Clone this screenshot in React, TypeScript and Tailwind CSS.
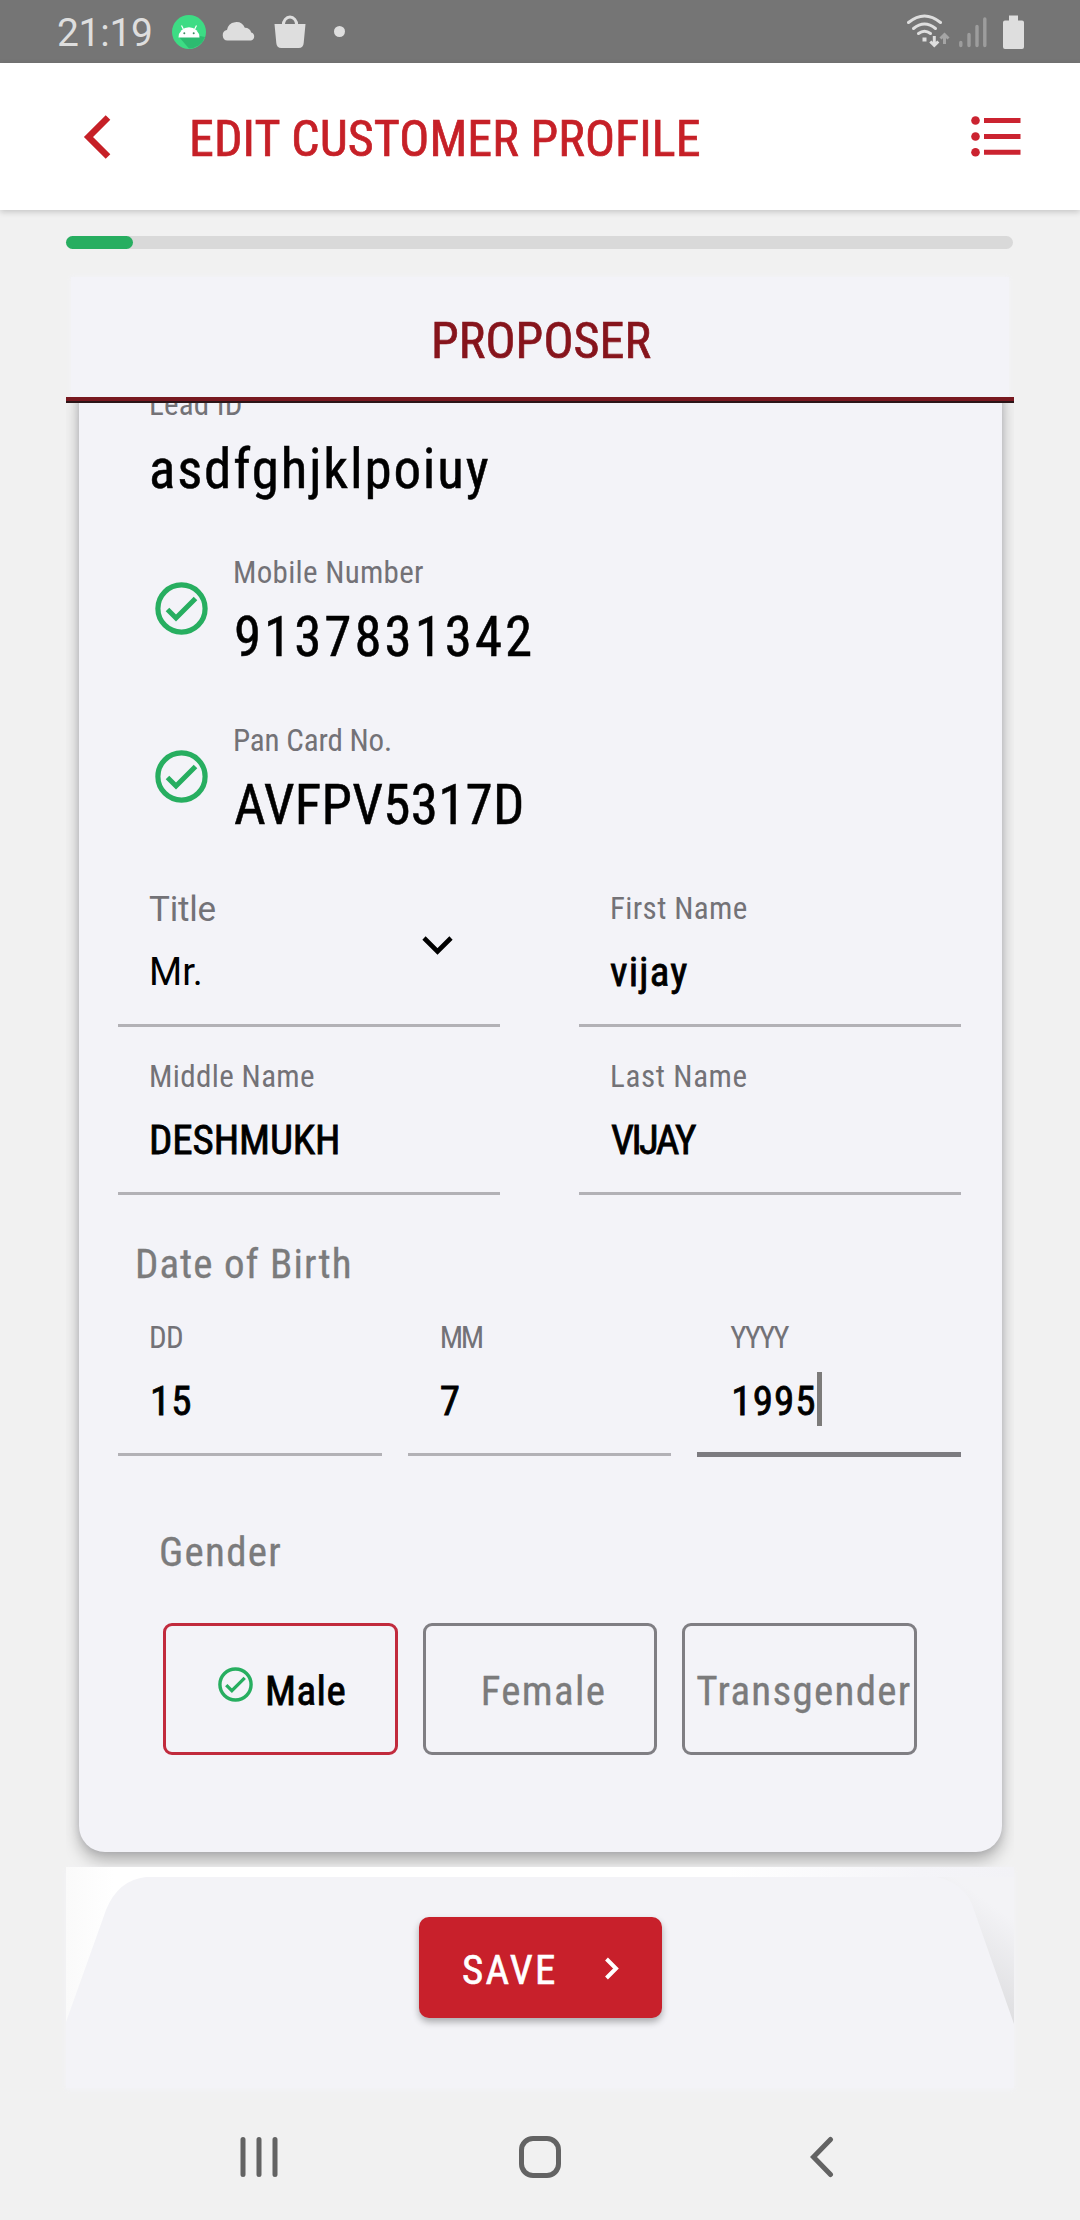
import type { ReactNode } from 'react';

function CheckCircle({ className }: { className: string }) {
  return (
    <svg viewBox="0 0 53 53" className={className} fill="none" stroke="#27ae60">
      <circle cx="26.5" cy="26.5" r="23.6" strokeWidth="5.2" />
      <path d="M12.5 27.5 L21 36 L40.5 16.5" strokeWidth="5" />
    </svg>
  );
}

function StatusBar() {
  return (
    <div className="flex h-[63px] shrink-0 items-start bg-[#757575]">
      <div className="ml-[57px] mt-[14px] w-[115px] font-['Roboto'] text-[39px] leading-[39px] tracking-[-0.3px] text-[#dedede]">21:19</div>
      <svg className="mt-[15px] h-[34px] w-[34px]" viewBox="0 0 34 34">
        <circle cx="17" cy="17" r="17" fill="#3ddc84" />
        <path d="M7 22 L17 33.5 A17 17 0 0 0 33 22 L28 21 Z" fill="#2dbb70" />
        <path d="M6.5 22.5 a10.5 10.2 0 0 1 21 0 Z" fill="#fff" />
        <path d="M11.5 14.5 L9.5 10.5 M22.5 14.5 L24.5 10.5" stroke="#fff" strokeWidth="1.2" />
        <circle cx="12.3" cy="18.3" r="1" fill="#3c8d62" />
        <circle cx="21.7" cy="18.3" r="1" fill="#3c8d62" />
      </svg>
      <svg className="ml-[16px] mt-[21px] h-[20px] w-[34px]" viewBox="0 0 34 20" fill="#dedede">
        <path d="M5.5 19.5 a5.3 5.3 0 0 1 -0.8 -10.4 h0.3 a9.3 9.3 0 0 1 17.8 -2.3 a6.6 6.6 0 0 1 6.4 4.6 a4.2 4.2 0 0 1 -0.2 8.1 Z" />
      </svg>
      <svg className="ml-[18px] mt-[15px] h-[34px] w-[32px]" viewBox="0 0 32 34">
        <path d="M0.5 9 h31 l-1.8 19 q-0.4 5 -5 5 h-17.4 q-4.6 0 -5 -5 Z" fill="#dedede" />
        <path d="M9.3 10 a6.7 8 0 0 1 13.4 0" fill="none" stroke="#dedede" strokeWidth="3" />
      </svg>
      <div className="ml-[28px] mt-[26px] h-[11px] w-[11px] rounded-full bg-[#dedede]" />
      <svg className="ml-auto mt-[14px] h-[35px] w-[44px]" viewBox="0 0 44 35" fill="none">
        <g stroke="#dedede" strokeWidth="3" strokeLinecap="round">
          <path d="M2.5 8.5 Q18.5 -4.5 34.5 8.5" />
          <path d="M7.5 14.5 Q18.5 5.5 29.5 14.5" />
          <path d="M12.5 19.5 Q18.5 15 24.5 19.5" />
        </g>
        <path d="M16.5 23.5 h4 v4 h-4 Z" fill="#dedede" />
        <path d="M28.3 22 v9 M24.3 27.5 l4 4 l4 -4" stroke="#dedede" strokeWidth="3" />
        <path d="M38.5 30 v-9 M34.5 24.5 l4 -4 l4 4" stroke="#a5a5a5" strokeWidth="3" />
      </svg>
      <svg className="ml-[9px] mt-[16px] h-[32px] w-[28px]" viewBox="0 0 28 32" stroke="#9d9d9d" strokeWidth="3.4" strokeLinecap="round">
        <path d="M1.8 26.5 V29.5 M10 18.5 V29.5 M18 10.5 V29.5 M25.8 3 V29.5" />
      </svg>
      <svg className="ml-[16px] mr-[56px] mt-[15px] h-[34px] w-[21px]" viewBox="0 0 21 34" fill="#dedede">
        <path d="M6 0.5 h9 v5 h4 q2 0 2 2 v24.5 q0 2 -2 2 h-17 q-2 0 -2 -2 v-24.5 q0 -2 2 -2 h4 Z" />
      </svg>
    </div>
  );
}

function Header() {
  return (
    <header className="relative z-10 flex h-[147px] shrink-0 items-start bg-white shadow-[0_2px_6px_rgba(0,0,0,0.18)]">
      <svg className="ml-[83px] mt-[51px] h-[46px] w-[28px]" viewBox="0 0 28 46" fill="none" stroke="#c62027" strokeWidth="6.5">
        <path d="M25 3.5 L5.5 23 L25 42.5" />
      </svg>
      <h1 className="ml-[78px] mt-[51px] whitespace-nowrap text-[50px] leading-[50px] tracking-[0.1px] text-[#c62027] [-webkit-text-stroke:0.7px]">
        EDIT CUSTOMER PROFILE
      </h1>
      <svg className="ml-auto mr-[59px] mt-[52px] h-[44px] w-[51px]" viewBox="0 0 51 44" fill="#cb2330">
        <circle cx="5.5" cy="5.5" r="4.3" />
        <circle cx="5.5" cy="21.5" r="4.3" />
        <circle cx="5.5" cy="37.3" r="4.3" />
        <path d="M14 3 h36.5 v5 h-36.5 Z M14 19 h36.5 v5 h-36.5 Z M14 34.8 h36.5 v5 h-36.5 Z" />
      </svg>
    </header>
  );
}

function Label({ className, children }: { className: string; children: ReactNode }) {
  return <div className={`h-[31px] whitespace-nowrap text-[31px] leading-[31px] text-[#737277] ${className}`}>{children}</div>;
}

function BigValue({ className, children }: { className: string; children: ReactNode }) {
  return (
    <div className={`mt-[22px] h-[55px] whitespace-nowrap text-[55px] leading-[55px] text-black [-webkit-text-stroke:0.5px] ${className}`}>
      {children}
    </div>
  );
}

type FieldProps = { label: string; value: string; labelClass: string; valueClass: string; focused?: boolean };

function Field({ label, value, labelClass, valueClass, focused }: FieldProps) {
  return (
    <div className="flex h-[134px] flex-col">
      <Label className={labelClass}>{label}</Label>
      <div className={`mt-[28px] flex h-[41px] items-center whitespace-nowrap text-[41px] leading-[41px] text-black [-webkit-text-stroke:0.8px] ${valueClass}`}>
        {value}
        {focused && <span className="-mt-[5px] h-[54px] w-[5px] shrink-0 bg-[#7c7b7a]" />}
      </div>
      {focused ? (
        <div className="-mb-px mt-[30px] h-[5px] shrink-0 bg-[#7c7b80]" />
      ) : (
        <div className="mt-[31px] h-[3px] bg-[#b2b1b6]" />
      )}
    </div>
  );
}

function TitleSelect() {
  return (
    <div className="flex h-[134px] flex-col font-['Roboto']">
      <div className="flex h-[100px] items-start">
        <div className="ml-[31px]">
          <div className="-mt-px text-[35px] leading-[35px] tracking-[-0.2px] text-[#737277]">Title</div>
          <div className="mt-[26px] text-[38px] leading-[38px] text-black">Mr.</div>
        </div>
        <svg className="ml-auto mr-[46px] mt-[42px] h-[21px] w-[33px]" viewBox="0 0 33 21" fill="none" stroke="#000" strokeWidth="4.6">
          <path d="M3 3 L16.5 16.5 L30 3" />
        </svg>
      </div>
      <div className="mt-[31px] h-[3px] bg-[#b2b1b6]" />
    </div>
  );
}

export default function App() {
  return (
    <div className="flex h-[2220px] w-[1080px] flex-col overflow-hidden bg-[#f1f1f1] font-['Roboto_Condensed','Roboto',sans-serif]">
      <StatusBar />
      <Header />

      <main className="mx-[66px] flex flex-col">
        <div className="mt-[26px] h-[13px] w-[947px] rounded-full bg-[#d9d9d9]">
          <div className="h-full w-[67px] rounded-full bg-[#27ae60]" />
        </div>

        <div className="mt-[28px] px-[5px]">
          <div className="h-[120px] bg-[#f3f3f8] pl-[360px] pt-[39px] text-[50px] leading-[50px] tracking-[0.1px] text-[#86141c] shadow-[0_0_5px_#f3f3f8] [-webkit-text-stroke:0.7px]">
            PROPOSER
          </div>
        </div>
        <div className="relative z-10 h-[6px] border-b-[2px] border-[#2b1518] bg-[#781820]" />

        <div className="h-[1464px] overflow-hidden pl-[13px] pr-[12.5px]">
          <section className="-mt-[30px] h-[1479px] rounded-[26px] bg-[#f3f3f8] px-[39px] pt-[16px] shadow-[0_9px_16px_rgba(0,0,0,0.26),0_0_8px_rgba(20,20,50,0.12)]">
            <div className="pl-[31px]">
              <Label className="tracking-[0.24px]">Lead ID</Label>
              <BigValue className="tracking-[1.84px]">asdfghjklpoiuy</BigValue>
            </div>

            <div className="mt-[60px] flex items-start pl-[37px]">
              <CheckCircle className="mt-[25px] h-[53px] w-[53px]" />
              <div className="ml-[25px]">
                <Label className="tracking-[0.29px]">Mobile Number</Label>
                <BigValue className="pl-[1px] tracking-[2.96px]">9137831342</BigValue>
              </div>
            </div>

            <div className="mt-[60px] flex items-start pl-[37px]">
              <CheckCircle className="mt-[25px] h-[53px] w-[53px]" />
              <div className="ml-[25px]">
                <Label className="tracking-[-0.17px]">Pan Card No.</Label>
                <BigValue className="pl-[1px] tracking-[0.27px]">AVFPV5317D</BigValue>
              </div>
            </div>

            <div className="mt-[60px] grid w-[843px] grid-cols-2 gap-x-[79px] gap-y-[34px]">
              <TitleSelect />
              <Field label="First Name" value="vijay" labelClass="pl-[31px] tracking-[0.38px]" valueClass="pl-[31px] tracking-[1.2px]" />
              <Field label="Middle Name" value="DESHMUKH" labelClass="pl-[31px] tracking-[0.36px]" valueClass="pl-[31px] tracking-[-0.1px]" />
              <Field label="Last Name" value="VIJAY" labelClass="pl-[31px] tracking-[0.65px]" valueClass="pl-[32px] tracking-[-2.6px]" />
            </div>

            <div className="mt-[49px] h-[41px] pl-[17px] text-[41px] leading-[41px] tracking-[1.04px] text-[#7b7b7c] [-webkit-text-stroke:0.3px]">Date of Birth</div>
            <div className="mt-[37px] grid w-[843px] grid-cols-3 gap-x-[26px]">
              <Field label="DD" value="15" labelClass="pl-[31px] tracking-[-0.7px]" valueClass="pl-[32px] tracking-[0.9px]" />
              <Field label="MM" value="7" labelClass="pl-[32px] tracking-[-2.2px]" valueClass="pl-[32px]" />
              <Field label="YYYY" value="1995" labelClass="pl-[33px] tracking-[-2.2px]" valueClass="pl-[34px] tracking-[1.1px]" focused />
            </div>

            <div className="mt-[76px] h-[41px] pl-[41px] text-[41px] leading-[41px] tracking-[1.29px] text-[#7b7b7c] [-webkit-text-stroke:0.3px]">Gender</div>
            <div className="ml-[45px] mt-[50px] grid h-[132px] w-[754px] grid-cols-3 gap-x-[25px] whitespace-nowrap text-[41px] leading-[41px]">
              <button className="flex items-start rounded-[9px] border-[3px] border-[#c12a3d] pl-[52px] text-black">
                <CheckCircle className="mt-[41px] h-[35px] w-[35px]" />
                <span className="ml-[12px] mt-[45px] tracking-[0.5px] [-webkit-text-stroke:0.8px]">Male</span>
              </button>
              <button className="flex items-start rounded-[9px] border-[3px] border-[#7f7e83] pl-[55px] text-[#7b7b7c] [-webkit-text-stroke:0.3px]">
                <span className="mt-[45px] tracking-[1.33px]">Female</span>
              </button>
              <button className="flex items-start rounded-[9px] border-[3px] border-[#7f7e83] pl-[11px] text-[#7b7b7c] [-webkit-text-stroke:0.3px]">
                <span className="mt-[45px] tracking-[1.29px]">Transgender</span>
              </button>
            </div>
          </section>
        </div>

        <footer className="relative h-[221px] bg-[#f3f3f7] pt-[50px] shadow-[0_2px_5px_#f3f3f7]">
          <svg className="absolute left-0 top-0 h-[160px] w-[948px]" viewBox="0 0 948 160" preserveAspectRatio="none">
            <defs>
              <linearGradient id="strip" x1="0" y1="0" x2="1" y2="0">
                <stop offset="0" stopColor="#fafafa" />
                <stop offset="0.05" stopColor="#ffffff" />
                <stop offset="0.7" stopColor="#ffffff" />
                <stop offset="0.9" stopColor="#f4f4f8" />
                <stop offset="1" stopColor="#f2f2f6" />
              </linearGradient>
              <linearGradient id="fold" x1="0.9" y1="0" x2="0.55" y2="0.9">
                <stop offset="0.25" stopColor="#f3f3f6" />
                <stop offset="1" stopColor="#dcdcde" />
              </linearGradient>
            </defs>
            <path d="M0 0 H948 V10 H80 Q52 13 40 43 L0 155 Z" fill="url(#strip)" />
            <path d="M870 10 H948 V157 L908 43 Q900 16 870 10 Z" fill="url(#fold)" />
          </svg>
          <button className="relative ml-[353px] flex h-[101px] w-[243px] items-start rounded-[10px] bg-[#c8202b] text-[41px] leading-[41px] text-white shadow-[0_4px_7px_rgba(0,0,0,0.3)]">
            <span className="ml-[43px] mt-[33px] tracking-[2.3px] [-webkit-text-stroke:0.6px]">SAVE</span>
            <svg className="ml-auto mr-[42px] mt-[40px] h-[23px] w-[16px]" viewBox="0 0 16 23" fill="none" stroke="#fff" strokeWidth="4">
              <path d="M2.5 2 L12 11.5 L2.5 21" />
            </svg>
          </button>
        </footer>
      </main>

      <nav className="mt-[48px] flex h-[44px] items-start">
        <svg className="ml-[240px] h-[42px] w-[38px]" viewBox="0 0 38 42" stroke="#636363" strokeWidth="5" strokeLinecap="round">
          <path d="M3 3.5 V38.5 M19 3.5 V38.5 M35 3.5 V38.5" />
        </svg>
        <svg className="ml-[241px] h-[42px] w-[42px]" viewBox="0 0 42 42" fill="none" stroke="#636363" strokeWidth="5">
          <rect x="2.5" y="2.5" width="37" height="37" rx="11.5" />
        </svg>
        <svg className="ml-[249px] h-[42px] w-[24px]" viewBox="0 0 24 42" fill="none" stroke="#636363" strokeWidth="5" strokeLinecap="round">
          <path d="M20.5 3.5 L3.5 21 L20.5 38.5" />
        </svg>
      </nav>
    </div>
  );
}
